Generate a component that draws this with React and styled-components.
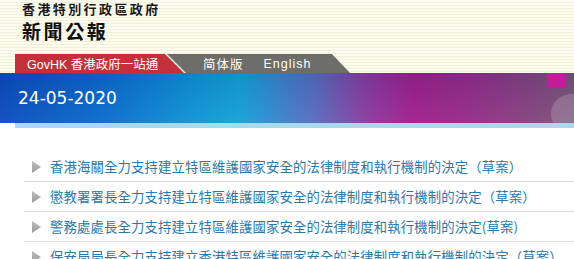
import React from 'react'
import styled, { createGlobalStyle } from 'styled-components'

const GlobalStyle = createGlobalStyle`
    html, body {
        margin: 0;
        padding: 0;
        background: #fff;
        overflow: hidden;
    }
    body {
        font-family: "Liberation Sans", "Noto Sans CJK TC", sans-serif;
    }
`

const Page = styled.div`
    width: 574px;
    height: 259px;
    overflow: hidden;
`

const Masthead = styled.header`
    height: 73px;
    display: flex;
    flex-direction: column;
    background: repeating-linear-gradient(to bottom, #fcfcef 0 2px, #f0f0db 2px 3px);
`

const GovTitle = styled.div`
    padding-left: 22px;
    margin-top: 1px;
    font-family: "Noto Sans CJK TC", sans-serif;
    font-weight: 700;
    font-size: 13px;
    line-height: 16px;
    letter-spacing: 2.4px;
    color: #1a1a1a;
`

const PressTitle = styled.div`
    padding-left: 22px;
    margin-top: 2px;
    font-family: "Noto Sans CJK TC", sans-serif;
    font-weight: 700;
    font-size: 19px;
    line-height: 24px;
    letter-spacing: 2.6px;
    color: #111;
`

const Tabs = styled.nav`
    margin-top: auto;
    margin-left: 15px;
    display: flex;
    height: 19px;
`

const Tab = styled.a`
    display: flex;
    align-items: center;
    gap: ${p => p.$gap || 0}px;
    height: 100%;
    box-sizing: border-box;
    color: #fff;
    font-size: 12.5px;
    text-decoration: none;
    white-space: nowrap;
    background: ${p => p.$bg};
    width: ${p => p.$w}px;
    padding-left: ${p => p.$pad}px;
    margin-left: ${p => p.$shift || 0}px;
    clip-path: ${p => p.$clip};
`

const Spaced = styled.span`
    letter-spacing: 1px;
`

const Banner = styled.div`
    position: relative;
    height: 50px;
    display: flex;
    align-items: center;
    padding-left: 18px;
    overflow: hidden;
    background:
        linear-gradient(to bottom, rgba(0, 20, 80, 0.12), rgba(255, 255, 255, 0.04)),
        linear-gradient(to right, #0b4cbf 0%, #0a6ccd 18%, #0e95d6 34%, #14a3d8 42%, #5a6bbf 55%, #8c3a9e 64%, #a11f8c 72%, #962c88 82%, #86427f 92%, #7a5478 100%);
`

const DateText = styled.h1`
    margin: 0;
    font-family: "DejaVu Sans", sans-serif;
    font-weight: 400;
    font-size: 17px;
    color: #fff;
`

const Square = styled.span`
    position: absolute;
    top: 0;
    left: 547px;
    width: 19px;
    height: 15px;
    background: #c21b9c;
`

const Bubble = styled.span`
    position: absolute;
    left: 551px;
    top: 21px;
    width: 40px;
    height: 40px;
    border-radius: 50%;
    background: rgba(200, 180, 200, 0.3);
`

const Strip = styled.div`
    height: 5px;
    margin-left: 15px;
    background: #a9daec;
`

const List = styled.ul`
    list-style: none;
    margin: 0 0 0 24px;
    padding: 24px 0 0;
`

const Item = styled.li`
    height: 29px;
    display: flex;
    align-items: center;
    gap: 9px;
    padding-left: 8px;
    border-bottom: 1px solid #dcdcdc;
`

const Link = styled.a`
    font-family: "Noto Sans CJK TC", sans-serif;
    font-size: 13.35px;
    letter-spacing: 0.15px;
    color: #2b78ab;
    text-decoration: none;
    white-space: nowrap;
`

const Arrow = () => (
    <svg width="9" height="12" viewBox="0 0 9 12">
        <defs>
            <linearGradient id="arr" x1="0" y1="0" x2="0" y2="1">
                <stop offset="0" stopColor="#bcbcbc" />
                <stop offset="1" stopColor="#9a9a9a" />
            </linearGradient>
        </defs>
        <polygon points="0,0 9,6 0,12" fill="url(#arr)" />
    </svg>
)

const news = [
    '香港海關全力支持建立特區維護國家安全的法律制度和執行機制的決定（草案）',
    '懲教署署長全力支持建立特區維護國家安全的法律制度和執行機制的決定（草案）',
    '警務處處長全力支持建立特區維護國家安全的法律制度和執行機制的決定(草案)',
    '保安局局長全力支持建立香港特區維護國家安全的法律制度和執行機制的決定（草案）',
]

export default function App() {
    return (
        <Page>
            <GlobalStyle />
            <Masthead>
                <GovTitle>香港特別行政區政府</GovTitle>
                <PressTitle>新聞公報</PressTitle>
                <Tabs>
                    <Tab $bg="#c2303a" $w={169} $pad={12} $clip="polygon(0 0, 150px 0, 169px 100%, 0 100%)">
                        GovHK 香港政府一站通
                    </Tab>
                    <Tab $bg="#6d6d69" $w={183} $pad={36} $gap={20} $shift={-17} $clip="polygon(0 0, 165px 0, 183px 100%, 19px 100%)">
                        <Spaced>简体版</Spaced>
                        <Spaced>English</Spaced>
                    </Tab>
                </Tabs>
            </Masthead>
            <Banner>
                <DateText>24-05-2020</DateText>
                <Square />
                <Bubble />
            </Banner>
            <Strip />
            <List>
                {news.map((n, i) => (
                    <Item key={i}>
                        <Arrow />
                        <Link href="#">{n}</Link>
                    </Item>
                ))}
            </List>
        </Page>
    )
}
